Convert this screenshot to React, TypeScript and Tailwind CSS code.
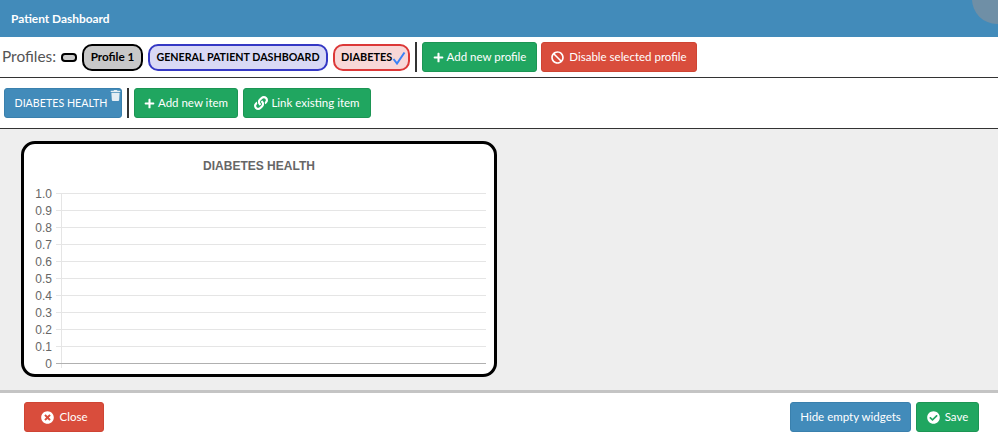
import React from "react";
import { FaBan, FaCheckCircle, FaLink, FaPlus, FaTimesCircle, FaTrash } from "react-icons/fa";

function Btn({ color, className = "", children }: { color: "green" | "red" | "blue"; className?: string; children: React.ReactNode }) {
  const c = color === "green" ? "bg-[#20a660] border-[#1c9554]" : color === "red" ? "bg-[#d94d3c] border-[#cf4433]" : "bg-[#428bba] border-[#3a80ad]";
  return <div className={`flex h-[30px] shrink-0 items-center justify-center rounded-[3px] border text-[11.5px] text-white ${c} ${className}`}>{children}</div>;
}

function Pill({ className = "", children }: { className?: string; children: React.ReactNode }) {
  return <div className={`flex h-[27px] shrink-0 items-center rounded-[10px] border-2 font-bold text-black ${className}`}>{children}</div>;
}

const ticks = ["1.0", "0.9", "0.8", "0.7", "0.6", "0.5", "0.4", "0.3", "0.2", "0.1", "0"];

function Chart() {
  return (
    <svg width="470" height="230" className="block" viewBox="0 0 470 230">
      <text x="235" y="26" textAnchor="middle" fontFamily="'Liberation Sans', sans-serif" fontWeight="700" fontSize="12" fill="#666">DIABETES HEALTH</text>
      <line x1="37.5" y1="49" x2="37.5" y2="224" stroke="#e5e5e5" />
      {ticks.map((t, i) => {
        const y = 49.5 + i * 17;
        return (
          <g key={t}>
            <line x1="32" y1={y} x2="462" y2={y} stroke={i === 10 ? "#b0b0b0" : "#e5e5e5"} />
            <text x="28" y={y + 4} textAnchor="end" fontFamily="'Liberation Sans', sans-serif" fontSize="12" fill="#666">{t}</text>
          </g>
        );
      })}
    </svg>
  );
}

export default function App() {
  return (
    <div className="flex h-[440px] w-[998px] flex-col overflow-hidden bg-white font-['Lato',sans-serif]">
      <header className="relative flex h-[37px] shrink-0 items-center overflow-hidden bg-[#428bba] pl-[11px] text-[11.9px] font-bold text-white">
        Patient Dashboard
        <div className="absolute left-[972px] top-[-26px] h-[50px] w-[50px] rounded-full bg-[#6f8fa6]" />
      </header>

      <div className="flex h-[41px] shrink-0 items-center border-b border-[#333] pl-[2px]">
        <span className="w-[54px] shrink-0 text-[15.4px] leading-none text-[#555]">Profiles:</span>
        <div className="ml-[5px] h-[9px] w-[16px] shrink-0 rounded-[4px] border-2 border-black bg-[#ccc]" />
        <Pill className="ml-[5px] w-[61px] justify-center border-black bg-[#c8c8c8] text-[11.7px]">Profile 1</Pill>
        <Pill className="ml-[5px] w-[180px] justify-center border-[#3538c4] bg-[#d9d9f5] text-[10.7px]">GENERAL PATIENT DASHBOARD</Pill>
        <Pill className="relative ml-[5px] w-[77px] border-[#dc3838] bg-[#f8d7d7] pl-[6px] text-[10.9px]">
          DIABETES
          <svg width="14" height="14" viewBox="0 0 14 14" className="absolute left-[57px] top-[5px]">
            <path d="M1.5 8 L5 12.5 L12.5 1.5" fill="none" stroke="#3b82f6" strokeWidth="2" />
          </svg>
        </Pill>
        <div className="ml-[5px] h-[30px] w-[2px] shrink-0 bg-[#333]" />
        <Btn color="green" className="ml-[5px] w-[115px] gap-[3px]"><FaPlus size={11} />Add new profile</Btn>
        <Btn color="red" className="ml-[4px] w-[156px] gap-[5px]"><FaBan size={13} />Disable selected profile</Btn>
      </div>

      <div className="flex h-[51px] shrink-0 items-center border-b border-[#333] pl-[4px]">
        <Btn color="blue" className="relative w-[118px] pr-[4px] !text-[10.7px]">
          DIABETES HEALTH
          <FaTrash size={11} className="absolute right-[0px] top-[1px] text-[#e3edf4]" />
        </Btn>
        <div className="ml-[5px] h-[30px] w-[2px] shrink-0 bg-[#333]" />
        <Btn color="green" className="ml-[5px] w-[104px] gap-[3px]"><FaPlus size={11} />Add new item</Btn>
        <Btn color="green" className="ml-[5px] w-[128px] gap-[3px]"><FaLink size={14} />Link existing item</Btn>
      </div>

      <main className="h-[261px] shrink-0 bg-[#eeeeee] pl-[21px] pt-[12px]">
        <div className="h-[236px] w-[476px] overflow-hidden rounded-[14px] border-[3px] border-black bg-white">
          <Chart />
        </div>
      </main>

      <footer className="flex flex-1 items-start justify-between border-t-[3px] border-[#c4c4c4] pl-[24px] pr-[19px] pt-[9px]">
        <Btn color="red" className="w-[80px] gap-[6px]">
          <FaTimesCircle size={13} />
          Close
        </Btn>
        <div className="flex gap-[5px]">
          <Btn color="blue" className="w-[121px]">Hide empty widgets</Btn>
          <Btn color="green" className="w-[63px] gap-[5px]">
            <FaCheckCircle size={13} />
            Save
          </Btn>
        </div>
      </footer>
    </div>
  );
}
